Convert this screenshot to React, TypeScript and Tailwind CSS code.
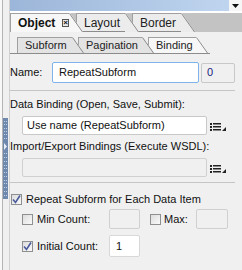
import type { ReactNode } from 'react';

function TabEdge({ fill, stroke, h, w }: { fill: string; stroke: string; h: number; w: number }) {
    return (
        <svg width={w} height={h} viewBox={`0 0 ${w} ${h}`} className="block shrink-0">
            <polygon points={`0,0 1,0 ${w},${h} 0,${h}`} fill={fill} />
            <line x1="0.5" y1="0.5" x2={w - 0.5} y2={h} stroke={stroke} strokeWidth="1" />
        </svg>
    );
}

function Tab({ label, selected, bold, extra, z, w }: { label: string; selected?: boolean; bold?: boolean; extra?: ReactNode; z: string; w: string }) {
    const fill = selected ? '#f7f7f7' : '#ececec';
    return (
        <div className={`relative flex h-[19px] ${z} -mr-[7px]`}>
            <div
                className={`${w} flex items-center gap-[7px] pl-[7px] border-l border-t border-[#a0a0a0] text-[12px] ${selected ? 'bg-[#f7f7f7]' : 'bg-[#ececec] border-b border-b-[#8c8c8c]'} ${bold ? 'font-bold text-[#111]' : 'text-[#222]'}`}
            >
                <span>{label}</span>
                {extra}
            </div>
            <TabEdge fill={fill} stroke="#8c8c8c" h={19} w={14} />
        </div>
    );
}

function SubTab({ label, selected, z, w }: { label: string; selected?: boolean; z: string; w: string }) {
    const fill = selected ? '#f7f7f7' : '#e3e3e3';
    return (
        <div className={`relative flex h-[16px] ${z} -mr-[6px]`}>
            <div
                className={`${w} flex items-center pl-[7px] border-l border-t border-[#a0a0a0] text-[11px] text-[#222] ${selected ? 'bg-[#f7f7f7]' : 'bg-[#e3e3e3]'}`}
            >
                {label}
            </div>
            <TabEdge fill={fill} stroke="#8c8c8c" h={16} w={12} />
        </div>
    );
}

function ListIcon() {
    return (
        <svg width="17" height="9" viewBox="0 0 17 9" className="block shrink-0">
            <rect x="0" y="0" width="2" height="2" fill="#222" />
            <rect x="3" y="0" width="8" height="1.5" fill="#222" />
            <rect x="0" y="3" width="2" height="2" fill="#222" />
            <rect x="3" y="3" width="8" height="1.5" fill="#222" />
            <rect x="0" y="6" width="2" height="2" fill="#222" />
            <rect x="3" y="6" width="8" height="1.5" fill="#222" />
            <polygon points="16,4 16,8 12,8" fill="#222" />
        </svg>
    );
}

function Check({ checked }: { checked?: boolean }) {
    return (
        <div className="w-[11px] h-[11px] shrink-0 border border-[#8e8f8f] bg-gradient-to-br from-[#dcdcdc] to-[#fafafa] flex items-center justify-center">
            {checked && (
                <svg width="9" height="9" viewBox="0 0 9 9">
                    <path d="M1 4.5 L3.5 7.5 L8 0.5" fill="none" stroke="#4a5c9c" strokeWidth="1.6" />
                </svg>
            )}
        </div>
    );
}

export default function App() {
    return (
        <div className="w-[242px] h-[270px] bg-[#f0f0f0] flex overflow-hidden font-['Liberation_Sans',sans-serif] text-[11px] text-[#111] leading-none">
            {/* left gutter with collapse handle */}
            <div className="w-[10px] shrink-0 flex">
                <div className="w-[3px] bg-[#f8f8f8] border-r border-[#b4b4b4]" />
                <div className="flex-1 flex flex-col pt-[118px] border-r border-[#d0d0d0]">
                    <div className="w-[5px] h-[24px] bg-[#6f88ad] flex flex-col items-center justify-around py-[2px]">
                        {Array.from({ length: 6 }).map((_, i) => (
                            <div key={i} className="w-[3px] h-[1px] border-x border-[#c7d3e4]" />
                        ))}
                    </div>
                    <div className="w-[5px] h-[8px] bg-[#6f88ad] flex items-center">
                        <svg width="5" height="7" viewBox="0 0 5 7"><polygon points="1,0 4,3.5 1,7" fill="#e8eef6" /></svg>
                    </div>
                    <div className="w-[5px] h-[49px] bg-[#6f88ad] flex flex-col items-center justify-around py-[2px]">
                        {Array.from({ length: 12 }).map((_, i) => (
                            <div key={i} className="w-[3px] h-[1px] border-x border-[#c7d3e4]" />
                        ))}
                    </div>
                </div>
            </div>

            <div className="flex-1 flex flex-col min-w-0">
                {/* title strip */}
                <div className="h-[11px] flex">
                    <div className="flex-1 bg-gradient-to-r from-[#9cb6d9] to-[#bfd5ef]" />
                    <div className="w-[13px] bg-[#f6f6f6] flex items-center justify-center">
                        <svg width="7" height="4" viewBox="0 0 7 4"><polygon points="0,0 7,0 3.5,4" fill="#111" /></svg>
                    </div>
                </div>

                {/* main tabs */}
                <div className="bg-white pt-[2px] flex">
                    <div className="flex flex-1 h-[19px] bg-[#c3c3c3]">
                        <Tab
                            label="Object"
                            bold
                            selected
                            z="z-30"
                            w="w-[59px]"
                            extra={
                                <div className="w-[8px] h-[8px] border border-[#555] bg-[#e8e8e8] flex items-center justify-center text-[8px] font-bold leading-none text-[#111]">
                                    ×
                                </div>
                            }
                        />
                        <Tab label="Layout" z="z-20" w="w-[49px]" />
                        <Tab label="Border" z="z-10" w="w-[49px]" />
                        <div className="flex-1" />
                    </div>
                </div>

                {/* panel */}
                <div className="flex-1 flex flex-col pr-[6px]">
                    {/* sub tabs */}
                    <div className="mt-[5px] flex">
                        <div className="w-[200px] flex pl-[7px] border-b border-[#8c8c8c]">
                            <SubTab label="Subform" z="z-30" w="w-[55px]" />
                            <SubTab label="Pagination" z="z-20" w="w-[64px]" />
                            <SubTab label="Binding" selected z="z-10" w="w-[48px]" />
                        </div>
                    </div>

                    {/* name row */}
                    <div className="mt-[8px] flex items-center">
                        <span className="w-[42px]">Name:</span>
                        <div className="w-[147px] h-[21px] border border-[#7eb4ea] bg-white rounded-[2px] flex items-center pl-[6px]">
                            RepeatSubform
                        </div>
                        <div className="ml-[2px] w-[34px] h-[20px] border border-[#c8c8c8] bg-[#f0f0f0] rounded-[2px] flex items-center pl-[5px] text-[#1a237e]">
                            0
                        </div>
                    </div>

                    <div className="mt-[7px] h-[1px] bg-[#c5c5c5] mr-[1px]" />

                    <div className="mt-[8px]">Data Binding (Open, Save, Submit):</div>
                    <div className="mt-[6px] flex items-end gap-[3px] pl-[12px]">
                        <div className="w-[185px] h-[19px] border border-[#c8c8c8] bg-white rounded-[2px] flex items-center pl-[4px]">
                            Use name (RepeatSubform)
                        </div>
                        <div className="pb-[3px]"><ListIcon /></div>
                    </div>

                    <div className="mt-[6px]">Import/Export Bindings (Execute WSDL):</div>
                    <div className="mt-[6px] flex items-end gap-[3px] pl-[12px]">
                        <div className="w-[185px] h-[19px] border border-[#d0d0d0] bg-[#f0f0f0] rounded-[2px]" />
                        <div className="pb-[3px]"><ListIcon /></div>
                    </div>

                    <div className="mt-[5px] h-[1px] bg-[#c5c5c5] mr-[1px]" />

                    <div className="mt-[11px] flex items-center gap-[4px] pl-[1px]">
                        <Check checked />
                        <span>Repeat Subform for Each Data Item</span>
                    </div>

                    <div className="mt-[4px] flex items-center pl-[12px]">
                        <Check />
                        <span className="ml-[4px] w-[72px]">Min Count:</span>
                        <div className="w-[31px] h-[20px] border border-[#d0d0d0] bg-[#f0f0f0] rounded-[2px]" />
                        <div className="ml-[10px]"><Check /></div>
                        <span className="ml-[3px] w-[32px]">Max:</span>
                        <div className="w-[32px] h-[20px] border border-[#d0d0d0] bg-[#f0f0f0] rounded-[2px]" />
                    </div>

                    <div className="mt-[6px] flex items-center pl-[12px]">
                        <Check checked />
                        <span className="ml-[4px] w-[72px]">Initial Count:</span>
                        <div className="w-[31px] h-[22px] border border-[#d8d8d8] bg-white rounded-[2px] flex items-center pl-[6px]">
                            1
                        </div>
                    </div>
                </div>
            </div>
        </div>
    );
}
